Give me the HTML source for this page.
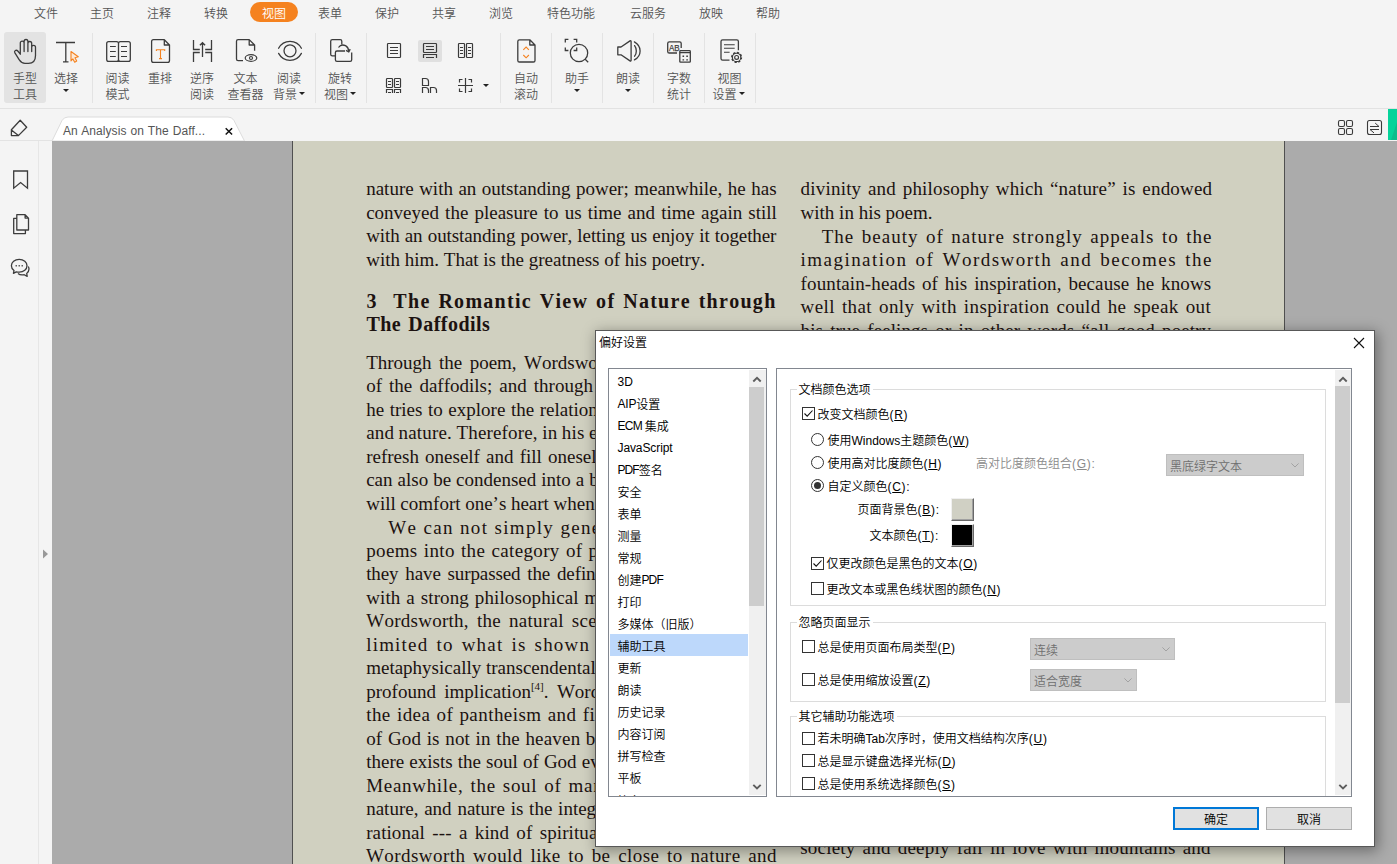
<!DOCTYPE html>
<html lang="zh-CN">
<head>
<meta charset="utf-8">
<title>偏好设置</title>
<style>
*{box-sizing:border-box;margin:0;padding:0}
html,body{width:1397px;height:864px;overflow:hidden}
body{position:relative;background:#f4f4f4;font-family:"Liberation Sans","Noto Sans CJK SC",sans-serif;font-size:12px;color:#555;font-weight:350}
.abs{position:absolute}
/* menu */
#menu{position:absolute;left:0;top:0;width:1397px;height:25px}
#menu span{position:absolute;top:5px;height:18px;line-height:18px;font-size:12px;color:#555;white-space:nowrap;transform:translateX(-50%)}
#menu span.sel{top:2px;line-height:24px;height:20px;background:#f5821f;color:#fff;border-radius:10px;width:48px;text-align:center}
/* toolbar */
#tb{position:absolute;left:0;top:25px;width:1397px;height:84px;border-bottom:1px solid #e2e2e2}
.sep{position:absolute;top:8px;width:1px;height:70px;background:#e3e3e3}
.btn{position:absolute;top:0;height:84px;width:60px;margin-left:-30px;text-align:center;font-size:12px;line-height:16px;color:#555}
.btn .lbl{position:absolute;left:0;right:0;top:46px;white-space:nowrap}
.btn svg{position:absolute;overflow:visible}
.arr{display:inline-block;width:0;height:0;border-left:3px solid transparent;border-right:3px solid transparent;border-top:3px solid #222;vertical-align:middle;margin-left:2px;margin-top:-5px}
.arrb{position:absolute;left:50%;margin-left:-3px;width:0;height:0;border-left:3px solid transparent;border-right:3px solid transparent;border-top:3px solid #222}
/* tabbar */
#tabs{position:absolute;left:0;top:109px;width:1397px;height:32px;background:#f4f4f4}
/* doc */
#side{position:absolute;left:0;top:141px;width:52px;height:723px;background:#f4f4f4}
#doc{position:absolute;left:52px;top:141px;width:1345px;height:723px;background:#ababab;overflow:hidden}
#page{position:absolute;left:240px;top:0;width:993px;height:723px;background:#d0d0c0;border-left:1px solid #505050;border-right:1px solid #505050}
.sp{font-size:11px;vertical-align:8px;line-height:0}
.ln{position:absolute;white-space:pre;font-kerning:none;font-family:"Liberation Serif",serif;font-size:19px;line-height:24px;height:24px;color:#1c1210}
.h{font-weight:bold;font-size:20px}
/* dialog */
#dlg{position:absolute;left:595px;top:330px;width:780px;height:517px;background:#fff;box-shadow:2px 3px 13px 1px rgba(0,0,0,.37);color:#000;font-size:12px}
#dlg .t{white-space:nowrap;height:17px;line-height:17px;font-size:12px}
#dlg u{text-decoration:underline;text-underline-offset:1px}
.box{border:1px solid #828790;background:#fff;overflow:hidden}
.li{position:absolute;left:1px;width:138px;height:22px;line-height:26px;padding-left:7.5px;white-space:nowrap;font-size:12px}
.li.sel{background:#bdd8fb}
.la{position:relative;top:-1px}
.sb{position:absolute;width:17px;background:#f0f0f0}
.sb .th{position:absolute;left:0;width:15px;background:#cdcdcd}
.grp{position:absolute;border:1px solid #dcdcdc}
.gl{background:#fff;padding:0 2px;margin-left:-2px}
.cb{position:absolute;width:13px;height:13px;border:1px solid #333;background:#fff}
.rd{position:absolute;width:13px;height:13px;border:1px solid #333;border-radius:50%;background:#fff}
.rd i{position:absolute;left:2px;top:2px;width:7px;height:7px;border-radius:50%;background:#333}
.dd{position:absolute;background:#ccc;border:1px solid #bfbfbf;color:#6f6f6f;font-size:12px;line-height:20px;white-space:nowrap}
.dd span{position:absolute;left:3px;top:1.5px}
.dd svg{position:absolute;right:4px;top:8px}
.ak{letter-spacing:.7px}
.sw{position:absolute;width:23px;height:23px;border:1px solid;border-color:#f0f0f0 #696969 #696969 #f0f0f0;box-shadow:inset -1px -1px 0 #a0a0a0}
.bt{position:absolute;width:86px;height:23px;line-height:25px;text-align:center;background:#e1e1e1;border:1px solid #adadad;font-size:12px}
.bt.ok{border:2px solid #0078d7;line-height:23px}
</style>
</head>
<body>
<div id="menu">
<span style="left:46px">文件</span><span style="left:102px">主页</span><span style="left:159px">注释</span><span style="left:216px">转换</span><span class="sel" style="left:274px">视图</span><span style="left:330px">表单</span><span style="left:387px">保护</span><span style="left:444px">共享</span><span style="left:501px">浏览</span><span style="left:571px">特色功能</span><span style="left:648px">云服务</span><span style="left:711px">放映</span><span style="left:768px">帮助</span>
</div>
<div id="tb">
<div class="abs" style="left:4px;top:7px;width:42px;height:71px;background:#e3e3e3;border-radius:3px"></div>
<div class="sep" style="left:92px"></div><div class="sep" style="left:315px"></div><div class="sep" style="left:366px"></div><div class="sep" style="left:500px"></div><div class="sep" style="left:551px"></div><div class="sep" style="left:602px"></div><div class="sep" style="left:653px"></div><div class="sep" style="left:704px"></div><div class="sep" style="left:755px"></div>

<div class="btn" style="left:25px"><svg style="left:17px;top:12px" width="26" height="28" viewBox="12 37 26 28" fill="none" stroke="#3c3c3c" stroke-width="1.3" stroke-linecap="round" stroke-linejoin="round"><path d="M20.300 54.300 V43 a1.900 1.900 0 0 1 3.800 0 V51.500 M24.100 43 V41.400 a1.900 1.900 0 0 1 3.800 0 V51.500 M27.900 43.400 a1.900 1.900 0 0 1 3.800 0 V51.500 M31.700 47.200 a1.900 1.900 0 0 1 3.800 0 V55.500 c0 5 -2.800 7.800 -7 7.800 h-3.500 c-2.500 0 -4.200 -1.200 -5.700 -3.500 l-4.400 -6.900 c-1.200 -2 1.400 -3.600 2.900 -1.900 l2.500 3.100"/></svg><div class="lbl">手型<br>工具</div></div>

<div class="btn" style="left:66px"><svg style="left:17px;top:12px" width="26" height="28" viewBox="53 37 26 28" fill="none" stroke="#3c3c3c" stroke-width="1.3"><path d="M56 42.500 H75 M65.800 42.500 V61.800 M63 61.800 H68.500"/><path d="M71 51.500 l7.300 5.300 l-3.300 1 l1.700 3.300 l-2 1.100 l-1.800 -3.300 l-1.900 2 z" fill="#fde9d6" stroke="#f5821f" stroke-width="1.100" stroke-linejoin="round"/></svg><div class="lbl">选择</div><div class="arrb" style="top:64px"></div></div>

<div class="btn" style="left:118px"><svg style="left:17px;top:15px" width="27" height="23" viewBox="105 40 27 23" fill="none" stroke="#3c3c3c" stroke-width="1.300"><path d="M118.500 43.500 c0 -1.200 -0.700 -1.900 -1.900 -1.900 h-8 c-1.200 0 -1.900 0.700 -1.900 1.900 v16 c0 1.200 0.700 1.900 1.900 1.900 h8 c1.200 0 1.900 -0.700 1.900 -1.900 z M118.500 43.500 c0 -1.200 0.700 -1.900 1.900 -1.900 h8 c1.200 0 1.900 0.700 1.900 1.900 v16 c0 1.200 -0.700 1.900 -1.900 1.900 h-8 c-1.200 0 -1.900 -0.700 -1.900 -1.900"/><path d="M110 46.500 h5.800 M110 51.500 h5.800 M110 56.500 h5.800 M121 46.500 h6 M121 51.500 h6 M121 56.500 h6" stroke-width="1"/></svg><div class="lbl" style="left:-1px">阅读<br>模式</div></div>

<div class="btn" style="left:160px"><svg style="left:20px;top:13px" width="21" height="26" viewBox="150 38 21 26" fill="none" stroke="#3c3c3c" stroke-width="1.300" stroke-linejoin="round"><path d="M153.500 39.700 h10.800 l5.200 5.300 v15.500 c0 1.200 -0.700 1.900 -1.900 1.900 h-14.100 c-1.200 0 -1.900 -0.700 -1.900 -1.900 v-18.900 c0 -1.200 0.700 -1.900 1.900 -1.900 z M164.300 39.700 v5.300 h5.200"/><path d="M156.400 51 v-1.300 h8.300 v1.300 M160.500 49.700 v8.800 M159 58.600 h3" stroke="#f5821f" stroke-width="1.100" stroke-linejoin="miter"/></svg><div class="lbl">重排</div></div>

<div class="btn" style="left:202px"><svg style="left:20px;top:14px" width="21" height="24" viewBox="192 39 21 24" fill="none" stroke="#3c3c3c" stroke-width="1.300"><path d="M193.500 40 v9.500 h6.300 M193.500 62 v-9.500 h6.300 M211.500 40 v9.500 h-6.300 M211.500 62 v-9.500 h-6.300 M202.500 57 V42.600 M199.900 45.300 l2.600 -2.600 l2.600 2.600" stroke-linejoin="miter"/></svg><div class="lbl">逆序<br>阅读</div></div>

<div class="btn" style="left:246px"><svg style="left:19px;top:13px" width="24" height="24" viewBox="235 38 24 24" fill="none" stroke="#3c3c3c" stroke-width="1.300"><path d="M243 60.600 h-4.900 c-1 0 -1.600 -0.600 -1.600 -1.600 v-17.800 c0 -1 0.600 -1.600 1.600 -1.600 h11.100 l5.400 5.400 v5.800 M249.200 39.600 v5.400 h5.400" stroke-linejoin="round"/><ellipse cx="251" cy="58" rx="5.800" ry="3.300" stroke-width="1.200"/><circle cx="251" cy="58" r="1.500" stroke-width="1.200"/></svg><div class="lbl" style="left:-1px">文本<br>查看器</div></div>

<div class="btn" style="left:290px"><svg style="left:17px;top:15px" width="26" height="22" viewBox="277 40 26 22" fill="none" stroke="#3c3c3c" stroke-width="1.300"><circle cx="290" cy="50.800" r="6"/><path d="M278.600 48.200 C281 43.800 285.200 41.300 290 41.300 C294.800 41.300 299 43.800 301.400 48.200 M278.600 53.400 C281 57.800 285.200 60.300 290 60.300 C294.800 60.300 299 57.800 301.400 53.400" stroke-linecap="round"/></svg><div class="lbl" style="left:-2px">阅读<br>背景<span class="arr"></span></div></div>

<div class="btn" style="left:341px"><svg style="left:18px;top:13px" width="24" height="24" viewBox="329 38 24 24" fill="none" stroke="#3c3c3c" stroke-width="1.300" stroke-linejoin="round"><path d="M335.400 55.800 h-3.100 c-1 0 -1.600 -0.600 -1.600 -1.600 v-13 c0 -1 0.600 -1.600 1.600 -1.600 h7.900 c1 0 1.600 0.600 1.600 1.600 v3.400"/><path d="M345 51 h-8 c-1 0 -1.600 0.600 -1.600 1.600 v7.200 c0 1 0.600 1.600 1.600 1.600 h13.100 c1 0 1.600 -0.600 1.600 -1.600 v-7.300"/><path d="M338.500 47.500 c1.500 -2.200 4.500 -3 7 -1.800 c2 1 3 2.800 3.200 5.500 M346 50.400 l2.800 1.600 l1.400 -2.900"/></svg><div class="lbl" style="left:-2px">旋转<br>视图<span class="arr"></span></div></div>

<!-- small icons -->
<div class="abs" style="left:418px;top:15px;width:24px;height:22px;background:#e0e0e0;border-radius:2px"></div>
<svg class="abs" style="left:380px;top:10px;overflow:visible" width="115" height="65" viewBox="380 35 115 65" fill="none" stroke="#3a3a3a" stroke-width="1.200">
<rect x="387.500" y="43.500" width="13" height="14" rx="0.800"/><path d="M390 47.500 h8 M390 50.500 h8 M390 53.500 h8"/>
<rect x="423.500" y="43.500" width="13" height="9" rx="0.800"/><path d="M426 46.500 h8 M426 49.500 h8 M423.500 58 v-3.500 h13 v3.500 M426 57.500 h8"/>
<rect x="458.500" y="43.500" width="6" height="14" rx="0.800"/><rect x="466.500" y="43.500" width="6" height="14" rx="0.800"/><path d="M460 47.500 h3 M460 50.500 h3 M460 53.500 h3 M468 47.500 h3 M468 50.500 h3 M468 53.500 h3"/>
<rect x="386.500" y="78.500" width="6" height="9" rx="0.800"/><rect x="394.500" y="78.500" width="6" height="9" rx="0.800"/><path d="M388 81.500 h3 M388 84.500 h3 M396 81.500 h3 M396 84.500 h3 M386.500 93 v-3.500 h6 v3.500 M394.500 93 v-3.500 h6 v3.500 M388 92.500 h3 M396 92.500 h3"/>
<path d="M422.500 78.500 h3 c2 0 3 1.200 3 3 v4 h-6 z M422.500 93 v-5.500 h3 c2 0 3 1.200 3 3 v2.500 M430.500 93 v-5.500 h3 c2 0 3 1.200 3 3 v2.500"/>
<path d="M465.500 78 v15 M458 85.500 h15 M459.500 82.500 v-3 h3 M468.500 79.500 h3 v3 M459.500 88.500 v3 h3 M468.500 91.500 h3 v-3"/>
</svg>
<div class="abs" style="left:483px;top:59px;width:0;height:0;border-left:3px solid transparent;border-right:3px solid transparent;border-top:3px solid #222"></div>

<div class="btn" style="left:526px"><svg style="left:20px;top:13px" width="21" height="26" viewBox="516 38 21 26" fill="none" stroke="#3c3c3c" stroke-width="1.300" stroke-linejoin="round"><path d="M519.400 39.800 h10.400 l5.200 5.200 v15.400 c0 1 -0.600 1.600 -1.600 1.600 h-14 c-1 0 -1.600 -0.600 -1.600 -1.600 v-19 c0 -1 0.600 -1.600 1.600 -1.600 z M529.800 39.800 v5.200 h5.200"/><path d="M523.300 49.800 l2.800 -2.800 l2.800 2.800 M523.300 55 l2.800 2.800 l2.800 -2.800" stroke="#f5821f" stroke-width="1.100" stroke-linejoin="miter"/></svg><div class="lbl">自动<br>滚动</div></div>

<div class="btn" style="left:577px"><svg style="left:17px;top:13px" width="26" height="25" viewBox="564 38 26 25" fill="none" stroke="#3c3c3c" stroke-width="1.300"><path d="M565.300 42.500 v-3.100 h3.100 M573.600 39.400 h3.100 v3.100 M565.300 47.400 v3.100 h3.100 M576.700 47.400 v3.100 h-3.100"/><circle cx="579" cy="53" r="8.700"/><path d="M585.200 59.200 l3 3"/></svg><div class="lbl">助手</div><div class="arrb" style="top:64px"></div></div>

<div class="btn" style="left:628px"><svg style="left:18px;top:14px" width="26" height="24" viewBox="616 39 26 24" fill="none" stroke="#3c3c3c" stroke-width="1.300" stroke-linejoin="round" stroke-linecap="round"><path d="M617.800 47 H621 L630 40.900 Q631.100 40.300 631.100 41.600 V60.200 Q631.100 61.500 630 60.900 L621 54.800 H617.800 Z"/><path d="M634.600 45.600 c2.300 3 2.300 7.600 0 10.600 M634.400 41.900 c7.600 4.400 7.600 13.600 0 18"/></svg><div class="lbl">朗读</div><div class="arrb" style="top:64px"></div></div>

<div class="btn" style="left:679px"><svg style="left:17px;top:15px" width="26" height="24" viewBox="666 40 26 24" fill="none" stroke="#3c3c3c" stroke-width="1.300" stroke-linejoin="round"><path d="M677 53 h-7.700 c-1 0 -1.600 -0.600 -1.600 -1.600 v-7.900 c0 -1 0.600 -1.600 1.600 -1.600 h10.300 c1 0 1.600 0.600 1.600 1.600 v4.500"/><rect x="679.800" y="50.600" width="10.500" height="11.600" rx="0.800"/><path d="M679.800 52.600 h10.500"/><path d="M682.500 55.600 h1.600 v1.300 h-1.600 z M686.300 55.600 h1.600 v1.300 h-1.600 z M682.500 59.200 h1.600 v1.300 h-1.600 z M686.300 59.200 h1.600 v1.300 h-1.600 z" fill="#3c3c3c" stroke="none"/><text x="669" y="50.700" font-family="Liberation Sans, sans-serif" font-size="9" fill="#3c3c3c" stroke="#3c3c3c" stroke-width="0.250" textLength="10.600" lengthAdjust="spacingAndGlyphs">AB</text></svg><div class="lbl">字数<br>统计</div></div>

<div class="btn" style="left:730px"><svg style="left:19px;top:13px" width="24" height="25" viewBox="719 38 24 25" fill="none" stroke="#3c3c3c" stroke-width="1.300" stroke-linejoin="round"><path d="M729.500 60.200 h-6.900 c-1 0 -1.600 -0.600 -1.600 -1.600 v-17.200 c0 -1 0.600 -1.600 1.600 -1.600 h14.200 c1 0 1.600 0.600 1.600 1.600 v8.800"/><path d="M724 44.700 h10.700 M724 48.300 h10.700 M724 52.300 h5.600" stroke-width="1.100"/><circle cx="736.600" cy="57.400" r="4.800" stroke-width="1.500" stroke-dasharray="2.200 1.570" stroke-dashoffset="0.300"/><circle cx="736.600" cy="57.400" r="4.200" stroke-width="1.100"/><circle cx="736.600" cy="57.400" r="1.900" stroke-width="1.200"/></svg><div class="lbl" style="left:-1px">视图<br>设置<span class="arr" style="margin-right:2px"></span></div></div>

</div>
<div id="tabs">
<div class="abs" style="left:0;top:31px;width:52px;height:1px;background:#e3e3e3"></div>
<svg class="abs" style="left:0;top:0" width="300" height="32" viewBox="0 109 300 32" fill="none">
<path d="M52 141 L62 120.500 Q64 117 68 117 H228 Q232 117 234 120.500 L244.500 141 Z" fill="#fff" stroke="#dcdcdc" stroke-width="1"/>
<path d="M20.200 120.300 l6.500 7 l-8.300 8.300 h-7 v-5.800 z M11.700 130.200 l6.700 5.400" stroke="#3c3c3c" stroke-width="1.300" stroke-linejoin="round"/>
<path d="M225.700 128.300 l6.400 6.200 M232.100 128.300 l-6.400 6.200" stroke="#111" stroke-width="1.500"/>
</svg>
<div class="abs" style="left:63px;top:13px;height:18px;line-height:18px;font-size:12px;color:#555;white-space:nowrap;letter-spacing:0.08px;word-spacing:0.6px">An Analysis on The Daff...</div>
<svg class="abs" style="left:1330px;top:0" width="67" height="32" viewBox="1330 109 67 32" fill="none" stroke="#3a3a3a" stroke-width="1.100">
<rect x="1338.500" y="120.500" width="6" height="6" rx="1.500"/><rect x="1346.500" y="120.500" width="6" height="6" rx="1.500"/><rect x="1338.500" y="128.500" width="6" height="6" rx="1.500"/><rect x="1346.500" y="128.500" width="6" height="6" rx="1.500"/>
<rect x="1367.500" y="120.500" width="14" height="14" rx="2"/>
<path d="M1370 126.500 h9 l-3.800 -3.400 M1379 129.500 h-9 l4 3.400" stroke-width="1"/>
<rect x="1388" y="109" width="9" height="31" fill="#06d39a" stroke="none"/>
<path d="M1397 122 L1391 140 H1397 Z" fill="#0cbd8c" stroke="none"/>
</svg>

</div>
<div id="side">
<div class="abs" style="left:38px;top:0;width:1px;height:723px;background:#e6e6e6"></div>
<svg class="abs" style="left:0;top:0" width="52" height="160" viewBox="0 141 52 160" fill="none" stroke="#3c3c3c" stroke-width="1.300" stroke-linejoin="round">
<path d="M13.700 171 h13.800 v17.200 l-6.900 -5.600 l-6.900 5.600 z" stroke-linejoin="miter"/>
<path d="M16.800 230 v-15.300 h8.300 l3.400 3.400 v11.900 z M25.100 214.700 v3.400 h3.400 M16.800 218.300 h-3.100 v15.300 h11.700 v-3.600"/>
<path d="M19.200 259.400 c4.500 0 7.800 2.800 7.800 6.400 s-3.300 6.400 -7.800 6.400 c-1 0 -2 -0.150 -2.900 -0.400 l-2.900 1.500 l0.600 -2.700 c-1.600 -1.200 -2.600 -2.900 -2.600 -4.800 c0 -3.600 3.300 -6.400 7.800 -6.400 z"/>
<path d="M28.300 266.500 c0.500 0.800 0.700 1.700 0.700 2.600 c0 1.700 -0.900 3.200 -2.300 4.300 l0.500 3 l-3 -1.700 c-1.800 0.400 -4.600 0.200 -6.200 -1.200"/>
<path d="M15.600 265.800 h1.200 M18.600 265.800 h1.200 M21.600 265.800 h1.200" stroke-width="1.400"/>
</svg>
<svg class="abs" style="left:42px;top:408px" width="8" height="10" viewBox="0 0 8 10"><path d="M1 0.500 L6 5 L1 9.500 Z" fill="#999"/></svg>

</div>
<div id="doc">
<div id="page"></div>
<div class="ln" style="left:314.2px;top:36px;word-spacing:0.73px">nature with an outstanding power; meanwhile, he has</div>
<div class="ln" style="left:314.2px;top:60px;word-spacing:1.36px">conveyed the pleasure to us time and time again still</div>
<div class="ln" style="left:314.2px;top:83px;letter-spacing:-0.10px;word-spacing:0.57px">with an outstanding power, letting us enjoy it together</div>
<div class="ln" style="left:314.2px;top:107px">with him. That is the greatness of his poetry.</div>
<div class="ln h" style="left:314.4px;top:148px;letter-spacing:1.28px;word-spacing:1.57px">3  The Romantic View of Nature through</div>
<div class="ln h" style="left:314.4px;top:171px;letter-spacing:0.47px;word-spacing:1.67px">The Daffodils</div>
<div class="ln" style="left:314.2px;top:210px;word-spacing:2.65px">Through the poem, Wordsworth</div>
<div class="ln" style="left:314.2px;top:233px;word-spacing:2.33px">of the daffodils; and through</div>
<div class="ln" style="left:314.2px;top:257px;word-spacing:0.83px">he tries to explore the relationship</div>
<div class="ln" style="left:314.2px;top:280px;letter-spacing:0.17px;word-spacing:-0.47px">and nature. Therefore, in his eyes</div>
<div class="ln" style="left:314.2px;top:304px;word-spacing:1.40px">refresh oneself and fill oneself</div>
<div class="ln" style="left:314.2px;top:327px;word-spacing:0.24px">can also be condensed into a b</div>
<div class="ln" style="left:314.2px;top:351px;word-spacing:-0.13px">will comfort one’s heart when</div>
<div class="ln" style="left:336.2px;top:375px;letter-spacing:1.32px;word-spacing:0.18px">We can not simply generalize</div>
<div class="ln" style="left:314.2px;top:398px;letter-spacing:0.36px;word-spacing:1.07px">poems into the category of pastoral</div>
<div class="ln" style="left:314.2px;top:421px;letter-spacing:-0.10px;word-spacing:2.13px">they have surpassed the definition</div>
<div class="ln" style="left:314.2px;top:445px;letter-spacing:0.12px;word-spacing:0.99px">with a strong philosophical meaning</div>
<div class="ln" style="left:314.2px;top:468px;letter-spacing:0.27px;word-spacing:3.07px">Wordsworth, the natural scenery</div>
<div class="ln" style="left:314.2px;top:492px;letter-spacing:1.20px;word-spacing:2.09px">limited to what is shown in</div>
<div class="ln" style="left:314.2px;top:515px;word-spacing:0.03px">metaphysically transcendental</div>
<div class="ln" style="left:314.2px;top:539px;letter-spacing:0.01px;word-spacing:3.58px">profound implication<span class="sp">[4]</span>. Wordsworth</div>
<div class="ln" style="left:314.2px;top:562px;letter-spacing:0.44px;word-spacing:1.01px">the idea of pantheism and firmly</div>
<div class="ln" style="left:314.2px;top:586px;letter-spacing:0.18px;word-spacing:0.58px">of God is not in the heaven but</div>
<div class="ln" style="left:314.2px;top:609px;word-spacing:0.40px">there exists the soul of God every</div>
<div class="ln" style="left:314.2px;top:633px;letter-spacing:0.70px;word-spacing:1.60px">Meanwhile, the soul of man</div>
<div class="ln" style="left:314.2px;top:656px;word-spacing:1.03px">nature, and nature is the integration</div>
<div class="ln" style="left:314.2px;top:680px;letter-spacing:0.09px;word-spacing:2.54px">rational --- a kind of spiritual</div>
<div class="ln" style="left:314.0px;top:703px;letter-spacing:0.44px;word-spacing:2.48px">Wordsworth would like to be close to nature and</div>
<div class="ln" style="left:748.6px;top:36px;letter-spacing:0.20px;word-spacing:1.73px">divinity and philosophy which “nature” is endowed</div>
<div class="ln" style="left:748.6px;top:60px">with in his poem.</div>
<div class="ln" style="left:769.7px;top:84px;letter-spacing:1.02px;word-spacing:1.70px">The beauty of nature strongly appeals to the</div>
<div class="ln" style="left:748.6px;top:107px;letter-spacing:1.46px;word-spacing:1.98px">imagination of Wordsworth and becomes the</div>
<div class="ln" style="left:748.6px;top:131px;letter-spacing:0.12px;word-spacing:1.92px">fountain-heads of his inspiration, because he knows</div>
<div class="ln" style="left:748.6px;top:154px;letter-spacing:0.39px;word-spacing:1.92px">well that only with inspiration could he speak out</div>
<div class="ln" style="left:748.6px;top:178px;letter-spacing:0.07px;word-spacing:2.46px">his true feelings or in other words “all good poetry</div>
<div class="ln" style="left:748.2px;top:695px;letter-spacing:0.21px;word-spacing:2.12px">society and deeply fall in love with mountains and</div>

</div>
<div id="dlg">
<div class="abs" style="left:0;top:0;width:780px;height:517px;border:1px solid #585858"></div>
<div class="abs t" style="left:4px;top:5px">偏好设置</div>
<svg class="abs" style="left:758px;top:7px" width="12" height="12" viewBox="0 0 12 12"><path d="M1 1 L11 11 M11 1 L1 11" stroke="#111" stroke-width="1.1"/></svg>
<div class="abs box" style="left:13px;top:38px;width:159px;height:429px">
<div class="li" style="top:1px"><span class="la">3D</span></div>
<div class="li" style="top:23px"><span class="la" style="letter-spacing:-.2px">AIP</span>设置</div>
<div class="li" style="top:45px"><span class="la" style="letter-spacing:-.7px">ECM </span>集成</div>
<div class="li" style="top:67px"><span class="la" style="letter-spacing:-.1px">JavaScript</span></div>
<div class="li" style="top:89px"><span class="la" style="letter-spacing:-.9px">PDF</span>签名</div>
<div class="li" style="top:111px">安全</div>
<div class="li" style="top:133px">表单</div>
<div class="li" style="top:155px">测量</div>
<div class="li" style="top:177px">常规</div>
<div class="li" style="top:199px">创建<span class="la" style="letter-spacing:-.9px">PDF</span></div>
<div class="li" style="top:221px">打印</div>
<div class="li" style="top:243px">多媒体（旧版）</div>
<div class="li sel" style="top:265px">辅助工具</div>
<div class="li" style="top:287px">更新</div>
<div class="li" style="top:309px">朗读</div>
<div class="li" style="top:331px">历史记录</div>
<div class="li" style="top:353px">内容订阅</div>
<div class="li" style="top:375px">拼写检查</div>
<div class="li" style="top:397px">平板</div>
<div class="li" style="top:420px">签名</div>
<div class="sb" style="left:140px;top:1px;height:425px"><div class="th" style="top:17px;height:219px"></div><svg class="abs" style="left:0;top:0" width="16" height="425" viewBox="0 0 16 425" fill="none" stroke="#5e5e5e" stroke-width="1.9"><path d="M4.300 11.500 L8 7.800 L11.700 11.500 M4.300 414.800 L8 418.500 L11.700 414.800"/></svg></div>
</div>
<div class="abs box" style="left:181px;top:38px;width:576px;height:429px">
<div class="grp" style="left:13px;top:20px;width:536px;height:217px"></div>
<div class="abs t gl" style="left:21.5px;top:13px">文档颜色选项</div>
<div class="cb" style="left:25px;top:38px"><svg width="11" height="11" viewBox="0 0 11 11" style="position:absolute;left:0;top:0"><path d="M1.500 5.500 L4.200 8.200 L9.500 2.500" fill="none" stroke="#111" stroke-width="1.100"/></svg></div><div class="abs t" style="left:40.5px;top:38px">改变文档颜色<span class="ak">(<u>R</u>)</span></div>
<div class="rd" style="left:34px;top:64px"></div><div class="abs t" style="left:50.5px;top:64px">使用Windows主题颜色<span class="ak">(<u>W</u>)</span></div>
<div class="rd" style="left:34px;top:87px"></div><div class="abs t" style="left:50.5px;top:87px">使用高对比度颜色<span class="ak">(<u>H</u>)</span></div>
<div class="abs t" style="left:199px;top:87px;color:#8a8a8a">高对比度颜色组合<span class="ak">(<u>G</u>):</span></div>
<div class="dd" style="left:389px;top:85px;width:138px;height:22px"><span>黑底绿字文本</span><svg width="8" height="5" viewBox="0 0 8 5"><path d="M0.400 0.400 L4 4 L7.600 0.400" fill="none" stroke="#a2a2a2" stroke-width="1"/></svg></div>
<div class="rd" style="left:34px;top:110px"><i></i></div><div class="abs t" style="left:50.5px;top:110px">自定义颜色<span class="ak">(<u>C</u>):</span></div>
<div class="abs t" style="left:80.5px;top:133px">页面背景色<span class="ak">(<u>B</u>):</span></div>
<div class="sw" style="left:174px;top:129px;background:#d0d0c4"></div>
<div class="abs t" style="left:92.5px;top:159px">文本颜色<span class="ak">(<u>T</u>):</span></div>
<div class="sw" style="left:174px;top:155px;background:#000"></div>
<div class="cb" style="left:34px;top:188px"><svg width="11" height="11" viewBox="0 0 11 11" style="position:absolute;left:0;top:0"><path d="M1.500 5.500 L4.200 8.200 L9.500 2.500" fill="none" stroke="#111" stroke-width="1.100"/></svg></div><div class="abs t" style="left:49.5px;top:187px">仅更改颜色是黑色的文本<span class="ak">(<u>O</u>)</span></div>
<div class="cb" style="left:34px;top:213px"></div><div class="abs t" style="left:49.5px;top:213px">更改文本或黑色线状图的颜色<span class="ak">(<u>N</u>)</span></div>
<div class="grp" style="left:13px;top:253px;width:536px;height:80px"></div>
<div class="abs t gl" style="left:21.5px;top:246px">忽略页面显示</div>
<div class="cb" style="left:25px;top:271px"></div><div class="abs t" style="left:40.5px;top:271px">总是使用页面布局类型<span class="ak">(<u>P</u>)</span></div>
<div class="dd" style="left:253px;top:269px;width:145px;height:22px"><span>连续</span><svg width="8" height="5" viewBox="0 0 8 5"><path d="M0.400 0.400 L4 4 L7.600 0.400" fill="none" stroke="#a2a2a2" stroke-width="1"/></svg></div>
<div class="cb" style="left:25px;top:304px"></div><div class="abs t" style="left:40.5px;top:304px">总是使用缩放设置<span class="ak">(<u>Z</u>)</span></div>
<div class="dd" style="left:253px;top:300px;width:107px;height:22px"><span>适合宽度</span><svg width="8" height="5" viewBox="0 0 8 5"><path d="M0.400 0.400 L4 4 L7.600 0.400" fill="none" stroke="#a2a2a2" stroke-width="1"/></svg></div>
<div class="grp" style="left:13px;top:347px;width:536px;height:145px"></div>
<div class="abs t gl" style="left:21.5px;top:340px">其它辅助功能选项</div>
<div class="cb" style="left:25px;top:363px"></div><div class="abs t" style="left:40.5px;top:362px">若未明确Tab次序时，使用文档结构次序<span class="ak">(<u>U</u>)</span></div>
<div class="cb" style="left:25px;top:385px"></div><div class="abs t" style="left:40.5px;top:385px">总是显示键盘选择光标<span class="ak">(<u>D</u>)</span></div>
<div class="cb" style="left:25px;top:408px"></div><div class="abs t" style="left:40.5px;top:408px">总是使用系统选择颜色<span class="ak">(<u>S</u>)</span></div>
<div class="sb" style="left:558px;top:1px;height:425px"><div class="th" style="top:16px;height:317px"></div><svg class="abs" style="left:0;top:0" width="16" height="425" viewBox="0 0 16 425" fill="none" stroke="#5e5e5e" stroke-width="1.9"><path d="M4.300 11.500 L8 7.800 L11.700 11.500 M4.300 414.800 L8 418.500 L11.700 414.800"/></svg></div>
</div>
<div class="bt ok" style="left:578px;top:477px">确定</div>
<div class="bt" style="left:671px;top:477px">取消</div>

</div>
</body>
</html>
